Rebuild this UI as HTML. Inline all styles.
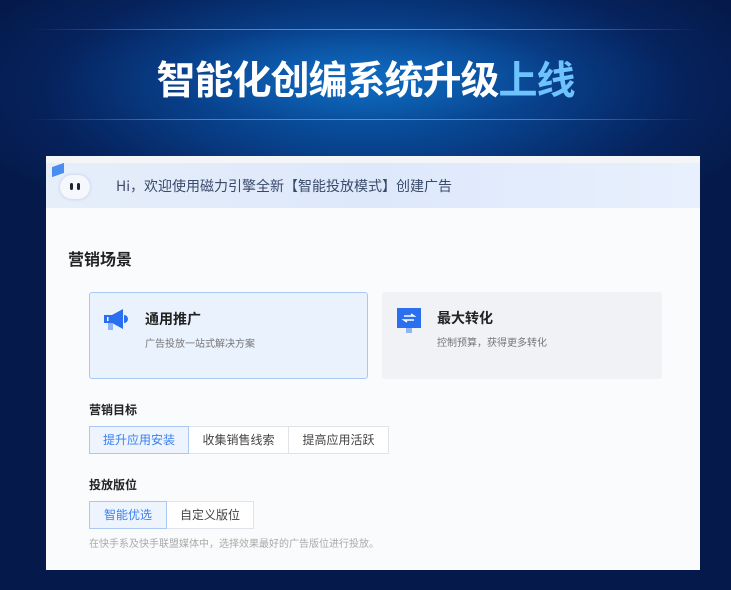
<!DOCTYPE html>
<html><head><meta charset="utf-8"><style>
*{margin:0;padding:0;box-sizing:border-box}
body{width:731px;height:590px;overflow:hidden;font-family:"Liberation Sans","Noto Sans CJK SC",sans-serif;
background:radial-gradient(ellipse 420px 160px at 365px 90px,#0a5fb0 0%,#08408a 40%,#06235e 75%,#051a4a 100%);position:relative}
.band{position:absolute;left:30px;right:30px;top:29px;height:91px;background:radial-gradient(ellipse 300px 70px at 50% 50%,rgba(20,120,210,.55),rgba(10,70,150,.15) 70%,transparent)}
.line{position:absolute;left:30px;right:30px;height:1px;background:linear-gradient(90deg,transparent,#2a8be0 25%,#3aa0f0 50%,#2a8be0 75%,transparent)}
.title{position:absolute;left:0;width:731px;top:50px;text-align:center;font-size:39px;font-weight:bold;color:#fff;letter-spacing:-1px;font-family:"Noto Sans CJK SC",sans-serif}
.title span{color:#6ec3ff}
.panel{position:absolute;left:46px;top:156px;width:654px;height:414px;background:#fafbfc}
.hdr{position:absolute;left:0;top:7px;width:654px;height:45px;background:linear-gradient(90deg,#e6eefa,#dde8fb 50%,#e8f0fd);}
.top{position:absolute;left:0;top:0;width:654px;height:7px;background:#f3f5f7}
.hi{position:absolute;left:70px;top:20px;font-size:14px;color:#3a4a6a;font-family:"Noto Sans CJK SC",sans-serif}
.bot{position:absolute;left:14px;top:19px;width:30px;height:24px;border-radius:12px;background:#f4f7fc;box-shadow:0 0 3px #b8c8e8}
.bot i{position:absolute;top:8px;width:3px;height:7px;background:#223;border-radius:2px}
.h2{position:absolute;font-family:"Noto Sans CJK SC",sans-serif;color:#222;font-weight:bold}
.card{position:absolute;top:136px;width:279px;height:87px;border-radius:3px}
.c1{left:43px;background:#eaf2fd;border:1px solid #a9c8f4}
.c2{left:336px;background:#f0f2f5;width:280px}
.ct{position:absolute;left:55px;top:16px;font-size:14px;font-weight:bold;color:#222;font-family:"Noto Sans CJK SC",sans-serif}
.cs{position:absolute;left:55px;top:42px;font-size:10px;color:#777;font-family:"Noto Sans CJK SC",sans-serif}
.seg{position:absolute;display:flex;height:28px;font-size:12px;font-family:"Noto Sans CJK SC",sans-serif}
.seg div{border:1px solid #e0e3e8;background:#fff;color:#444;line-height:26px;text-align:center;margin-left:-1px}
.seg div.on{border-color:#a9c8f4;background:#eef4fe;color:#3a7ff0;position:relative}
.note{position:absolute;left:43px;top:379px;font-size:10px;color:#aaa;font-family:"Noto Sans CJK SC",sans-serif}
</style></head><body>
<div class="band"></div>
<div class="line" style="top:29px"></div>
<div class="line" style="top:119px"></div>
<div class="title">智能化创编系统升级<span>上线</span></div>
<div class="panel">
<div class="top"></div>
<div class="hdr"></div>
<div style="position:absolute;left:6px;top:9px;width:12px;height:10px;background:#4a8cf0;transform:skewY(-20deg)"></div>
<div class="bot"><i style="left:10px"></i><i style="left:17px"></i></div>
<div class="hi">Hi，欢迎使用磁力引擎全新【智能投放模式】创建广告</div>
<div class="h2" style="left:22px;top:90px;font-size:16px">营销场景</div>
<div class="card c1">
<svg style="position:absolute;left:13px;top:16px" width="28" height="30" viewBox="0 0 28 30"><path d="M1 6h8l11-6v20l-11-6H1z" fill="#2a6ff0"/><path d="M21 6a4 4 0 010 8z" fill="#2a6ff0"/><rect x="5" y="14" width="5" height="7" fill="#8fb4f5"/><rect x="4" y="8" width="1.5" height="4" fill="#fff"/></svg>
<div class="ct">通用推广</div><div class="cs">广告投放一站式解决方案</div></div>
<div class="card c2">
<svg style="position:absolute;left:15px;top:16px" width="26" height="28" viewBox="0 0 26 28"><rect x="0" y="0" width="24" height="20" fill="#2a6ff0"/><rect x="9" y="20" width="6" height="5" fill="#8fb4f5"/><path d="M7 8h10l-3-2M17 12H7l3 2" stroke="#fff" stroke-width="1.5" fill="none"/></svg>
<div class="ct">最大转化</div><div class="cs">控制预算，获得更多转化</div></div>
<div class="h2" style="left:43px;top:245px;font-size:12px">营销目标</div>
<div class="seg" style="left:43px;top:270px"><div class="on" style="width:100px;margin-left:0">提升应用安装</div><div style="width:101px">收集销售线索</div><div style="width:101px">提高应用活跃</div></div>
<div class="h2" style="left:43px;top:320px;font-size:12px">投放版位</div>
<div class="seg" style="left:43px;top:345px"><div class="on" style="width:78px;margin-left:0">智能优选</div><div style="width:88px">自定义版位</div></div>
<div class="note">在快手系及快手联盟媒体中，选择效果最好的广告版位进行投放。</div>
</div>
</body></html>
